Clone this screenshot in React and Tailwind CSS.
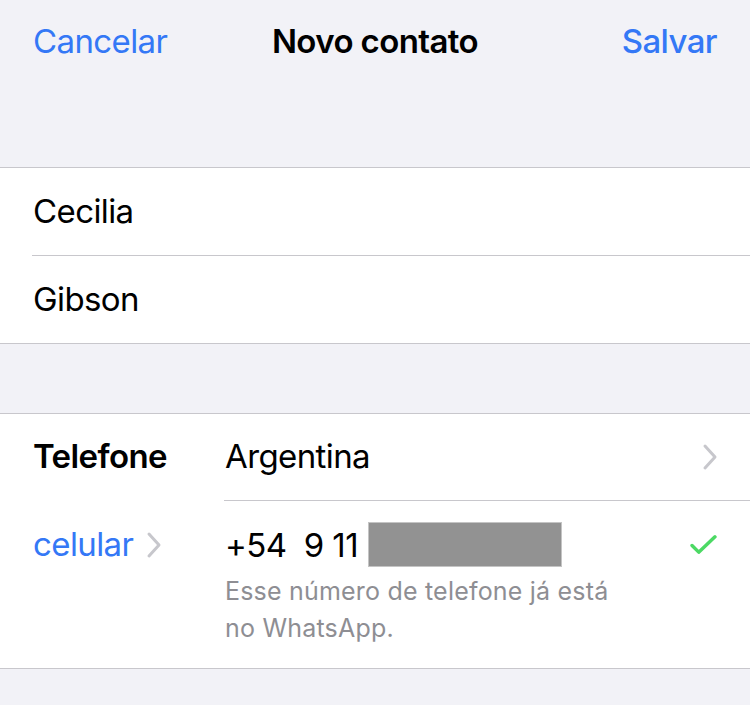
import React from 'react';

const font = { fontFamily: 'Inter, "Noto Sans", sans-serif' };

function Chevron({ className }) {
  return (
    <svg viewBox="0 0 16 28" className={className} fill="none" stroke="currentColor" strokeWidth="3" strokeLinecap="round" strokeLinejoin="round">
      <path d="M3 3l10 11-10 11" />
    </svg>
  );
}

export default function App() {
  return (
    <div className="w-[750px] h-[705px] bg-[#f2f2f7] overflow-hidden text-black" style={font}>
      <header className="h-[168px] border-b border-[#c8c7cc]">
        <div className="h-[84px] px-[33px] grid grid-cols-[1fr_auto_1fr] items-center text-[33px] tracking-[-0.6px]">
          <span className="text-[#3478f6]">Cancelar</span>
          <span className="font-semibold">Novo contato</span>
          <span className="text-[#3478f6] font-medium justify-self-end">Salvar</span>
        </div>
      </header>

      <section className="bg-white border-b border-[#c8c7cc] text-[33px] tracking-[-0.6px]">
        <div className="h-[87px] pl-[33px] flex items-center">
          <span>Cecilia</span>
        </div>
        <div className="ml-[32px] border-t border-[#c8c7cc] h-[88px] pl-px flex items-center">
          <span>Gibson</span>
        </div>
      </section>

      <div className="h-[70px] border-b border-[#c8c7cc]" />

      <section className="bg-white border-b border-[#c8c7cc] text-[33px] tracking-[-0.6px]">
        <div className="flex h-[86px]">
          <div className="w-[224px] pl-[33px] flex items-center font-semibold">Telefone</div>
          <div className="flex-1 flex items-center justify-between pr-[32px] pl-px">
            <span>Argentina</span>
            <Chevron className="w-[16px] h-[28px] text-[#c7c7cc]" />
          </div>
        </div>
        <div className="flex h-[168px]">
          <div className="w-[224px] pl-[33px] pt-[20px] flex items-start gap-[13px]">
            <span className="text-[#3478f6]">celular</span>
            <Chevron className="w-[16px] h-[28px] mt-[11px] text-[#c7c7cc]" />
          </div>
          <div className="flex-1 border-t border-[#c8c7cc] pr-[32px]">
            <div className="flex items-start justify-between pt-[20px] pl-px">
              <div className="flex items-center">
                <span>+54&nbsp; 9 11</span>
                <span className="ml-[10px] -mt-[3px] w-[194px] h-[45px] bg-[#929292] border border-[#c4c4c4]" />
              </div>
              <svg viewBox="0 0 28 22" className="w-[27px] h-[21px] mt-[13px] mr-[1px]" fill="none" stroke="#4cd964" strokeWidth="3.6" strokeLinecap="round" strokeLinejoin="round">
                <path d="M2 12l7 7L26 3" />
              </svg>
            </div>
            <p className="pl-px mt-[2px] text-[25px] leading-[37px] tracking-[0.2px] text-[#8e8e93]">
              Esse número de telefone já está<br />no WhatsApp.
            </p>
          </div>
        </div>
      </section>
    </div>
  );
}
